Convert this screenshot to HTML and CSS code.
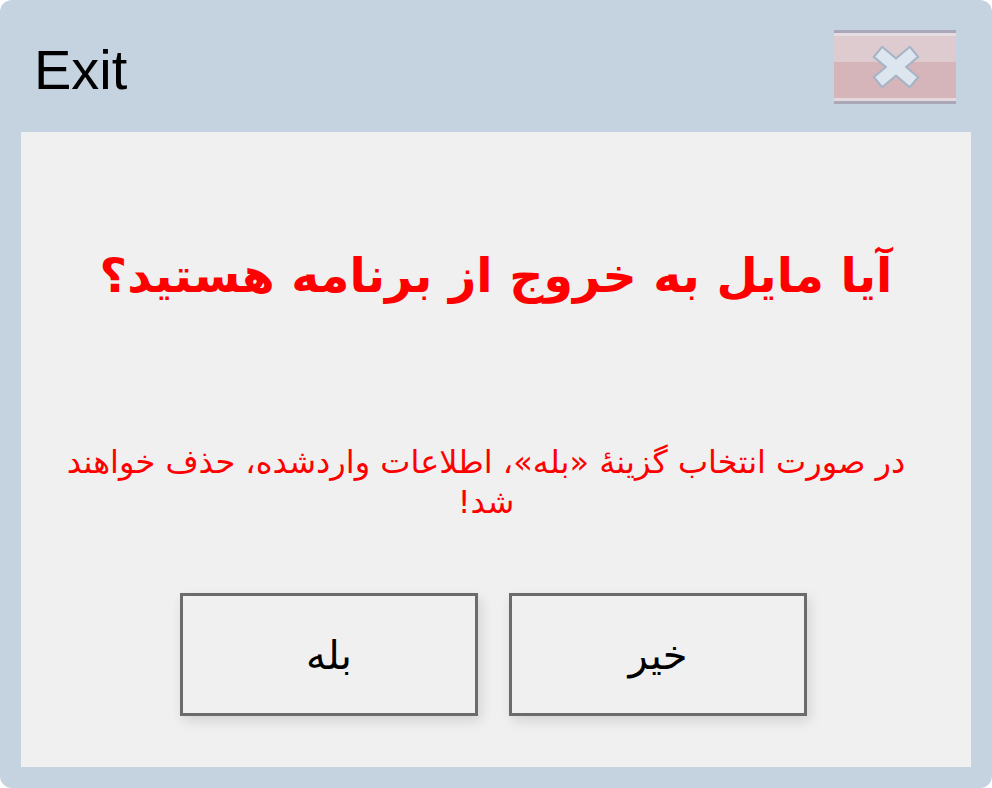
FILE: index.html
```html
<!DOCTYPE html>
<html lang="fa">
<head>
<meta charset="utf-8">
<link rel="stylesheet" href="styles.css">
</head>
<body>
<div class="window">
  <div class="titlebar">
    <div class="title">Exit</div>
    <div class="close">
      <svg class="close-icon" width="48" height="42" viewBox="0 0 48 42">
        <path d="M11 10 L37 32 M37 10 L11 32" fill="none" stroke="#a3b4c6" stroke-width="15" stroke-linecap="square"/>
        <path d="M11 10 L37 32 M37 10 L11 32" fill="none" stroke="#dde6ee" stroke-width="11" stroke-linecap="square"/>
      </svg>
    </div>
  </div>
  <div class="content" dir="rtl">
    <h1 class="question">آیا مایل به خروج از برنامه هستید؟</h1>
    <p class="warning">در صورت انتخاب گزینهٔ «بله»، اطلاعات واردشده، حذف خواهند شد!</p>
    <div class="buttons">
      <button class="btn">خیر</button>
      <button class="btn">بله</button>
    </div>
  </div>
</div>
</body>
</html>
```
FILE: styles.css
```css
html, body {
  margin: 0;
  padding: 0;
  background: #ffffff;
}
.window {
  width: 992px;
  height: 788px;
  box-sizing: border-box;
  background: #c5d3e0;
  border-radius: 12px;
  display: flex;
  flex-direction: column;
  overflow: hidden;
}
.titlebar {
  height: 132px;
  flex: none;
  display: flex;
  justify-content: space-between;
  align-items: flex-start;
  padding: 0 36px 0 34px;
  box-sizing: border-box;
}
.title {
  font-family: "Liberation Sans", Arial, sans-serif;
  font-size: 56px;
  line-height: 1;
  margin-top: 42px;
  color: #000;
}
.close {
  margin-top: 30px;
  width: 122px;
  height: 74px;
  box-sizing: border-box;
  border-top: 3px solid #aaa7b9;
  border-bottom: 3px solid #aaa7b9;
  background: linear-gradient(to bottom, #e6dde2 0, #e6dde2 3px, #decbd0 3px, #decbd0 42%, #d5b5ba 42%, #d5b5ba calc(100% - 3px), #e4d8dd calc(100% - 3px));
  display: flex;
  align-items: center;
  justify-content: center;
}
.close-icon {
  margin-left: 2px;
  filter: blur(0.4px);
}
.content {
  flex: 1;
  margin: 0 21px 21px;
  background: #f0f0f0;
  display: flex;
  flex-direction: column;
  align-items: center;
  font-family: "DejaVu Sans", sans-serif;
}
.question {
  margin: 116px 0 0;
  font-size: 47.5px;
  font-weight: bold;
  color: #ff0000;
  line-height: 56px;
  text-align: center;
}
.warning {
  margin: 138px 0 0;
  padding: 0 52px 0 32px;
  font-size: 32px;
  line-height: 40px;
  color: #ff0000;
  text-align: center;
}
.buttons {
  display: flex;
  gap: 31px;
  margin-top: 71px;
  margin-right: 5px;
}
.btn {
  width: 298px;
  height: 123px;
  box-sizing: border-box;
  border: 3px solid #6b6b6b;
  background: #f0f0f0;
  font-family: "DejaVu Sans", sans-serif;
  font-size: 40px;
  color: #000;
  box-shadow: 3px 5px 12px rgba(0, 0, 0, 0.12);
  padding: 0;
}
```
